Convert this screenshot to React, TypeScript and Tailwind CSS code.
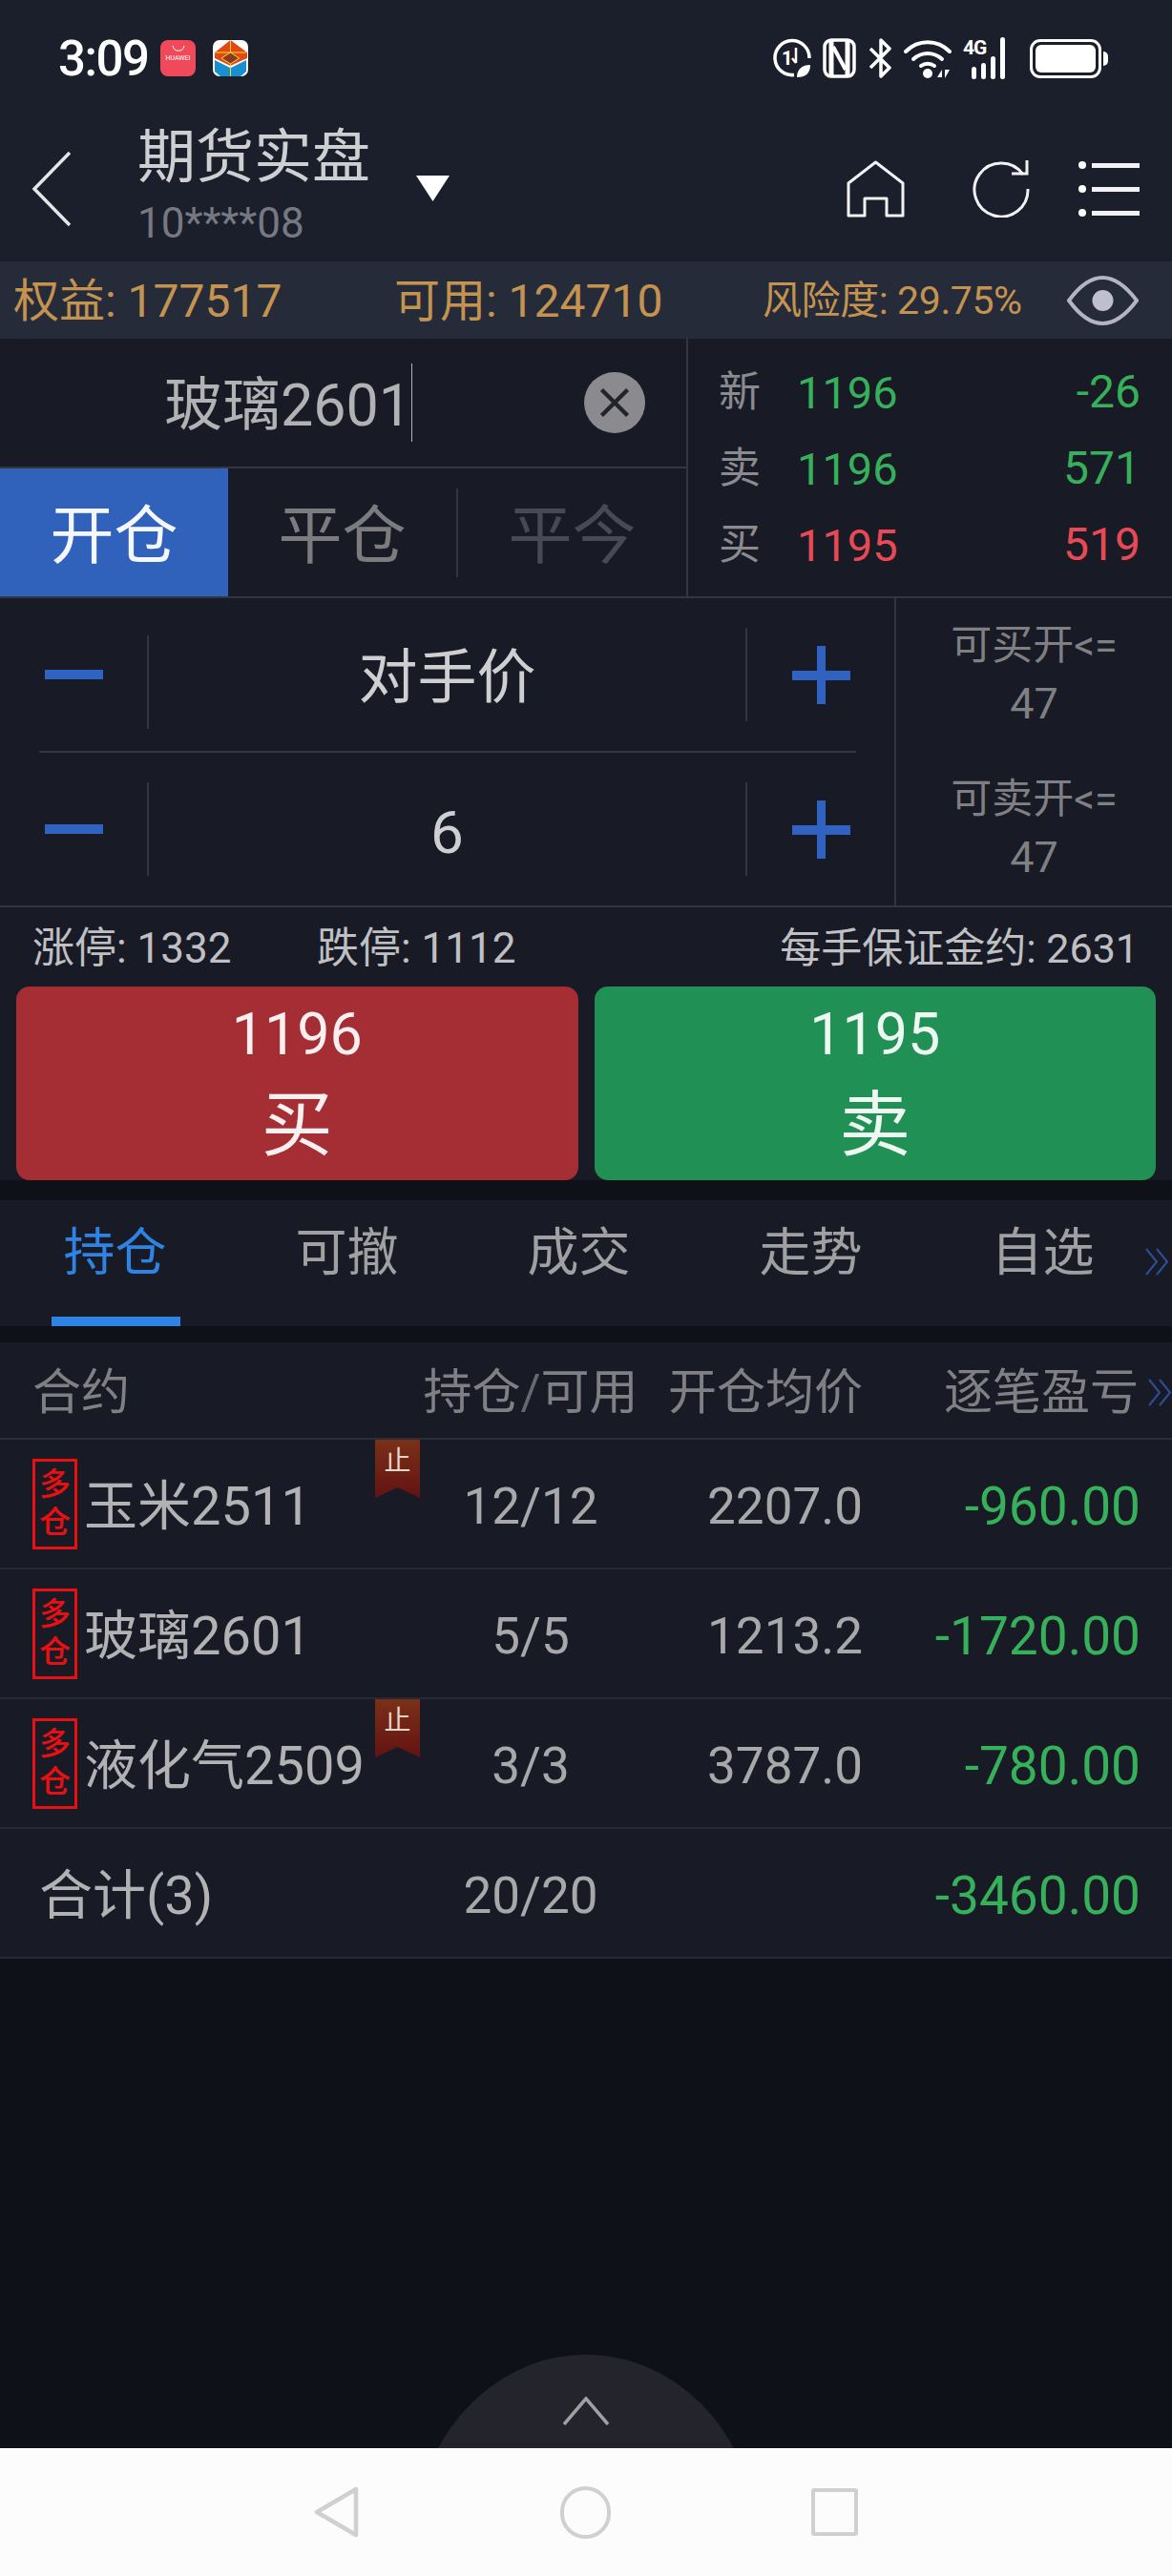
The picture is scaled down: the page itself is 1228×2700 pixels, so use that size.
import React from "react";

const positions = [
  { name: "玉米2511", pos: "12/12", price: "2207.0", pnl: "-960.00", stop: true },
  { name: "玻璃2601", pos: "5/5", price: "1213.2", pnl: "-1720.00", stop: false },
  { name: "液化气2509", pos: "3/3", price: "3787.0", pnl: "-780.00", stop: true },
];

const Chevrons = ({ className }: { className: string }) => (
  <svg viewBox="0 0 25 29" fill="none" stroke="#2f4f95" strokeWidth="2" className={className}>
    <path d="M1 1l11 13.5L1 28M12 1l11 13.5L12 28" />
  </svg>
);

const StatusIcons = () => (
  <div className="flex items-center">
    <svg viewBox="0 0 40 44" className="h-[44px] w-[40px]" fill="none" stroke="#fff" strokeWidth="3.5">
      <path d="M22 39.5A18 18 0 1 1 38 22" />
      <text x="9" y="29" fill="#fff" stroke="none" fontSize="20" fontWeight="700">1</text>
      <path d="M24 11v16M20 22l4 5" strokeWidth="2.5" />
      <path d="M25 42c0-9 6-13 14-13 0 9-5 13-14 13z" fill="#fff" stroke="none" />
    </svg>
    <svg viewBox="0 0 35 42" className="ml-[12px] h-[42px] w-[35px]" fill="none" stroke="#fff">
      <rect x="2" y="2" width="31" height="38" rx="7" strokeWidth="3.5" />
      <path d="M9 3v36M26 3v36" strokeWidth="5" />
      <path d="M11 9l13 24" strokeWidth="4" />
    </svg>
    <svg viewBox="0 0 24 44" className="ml-[13px] h-[44px] w-[24px]" fill="none" stroke="#fff" strokeWidth="3.5">
      <path d="M2 12l20 20-9 9V3l9 9L2 32" strokeLinejoin="round" />
    </svg>
    <svg viewBox="0 0 50 44" className="ml-[13px] h-[44px] w-[50px]" fill="none" stroke="#fff" strokeWidth="4" strokeLinecap="round">
      <path d="M2 15c13-13 33-13 46 0" />
      <path d="M10 23c9-8 21-8 30 0" />
      <path d="M18 30c4-3 10-3 14 0" />
      <circle cx="25" cy="38" r="5" fill="#fff" stroke="none" />
      <path d="M35 42h5l0-8zM43 34v9l5-9z" fill="#fff" stroke="none" />
    </svg>
    <div className="relative ml-[12px] h-[44px] w-[57px]">
      <span className="absolute left-0 top-0 text-[21px] leading-[22px] font-bold tracking-[-1px] text-white">4G</span>
      <div className="absolute bottom-0 left-[9px] flex items-end gap-[5px]">
        <div className="h-[13px] w-[5px] rounded-full bg-white" />
        <div className="h-[17px] w-[5px] rounded-full bg-white" />
        <div className="h-[24px] w-[5px] rounded-full bg-white" />
        <div className="h-[44px] w-[5px] rounded-full bg-white" />
      </div>
    </div>
    <div className="ml-[13px] flex items-center">
      <div className="h-[41px] w-[75px] rounded-[11px] border-[3px] border-white p-[3px]">
        <div className="h-full w-full rounded-[6px] bg-white" />
      </div>
      <div className="ml-[2px] h-[15px] w-[5px] rounded-r-full bg-white" />
    </div>
  </div>
);

const Ribbon = () => (
  <div className="absolute left-[393px] top-0 flex h-[61px] w-[47px] justify-center bg-linear-to-b from-[#7a3018] to-[#631212] pt-[7px] text-[28px] leading-[32px] text-[#e8d6cc] [clip-path:polygon(0_0,100%_0,100%_100%,50%_82%,0_100%)]">
    止
  </div>
);

const Stepper = ({ value, dividerClass }: { value: string; dividerClass: string }) => (
  <div className="flex flex-1 items-center pl-[47px] pr-[46px]">
    <div className="h-[10px] w-[61px] bg-[#3062c2]" />
    <div className={`ml-[46px] h-[98px] w-[2px] bg-[#33363d] ${dividerClass}`} />
    <div className="flex-1 pt-[7px] text-center text-[62px] leading-none text-[#cfcfd1]">{value}</div>
    <div className="h-[98px] w-[2px] bg-[#33363d]" />
    <div className="relative ml-[47px] h-[61px] w-[61px]">
      <div className="absolute left-0 top-[26px] h-[10px] w-[61px] bg-[#3062c2]" />
      <div className="absolute left-[26px] top-0 h-[61px] w-[9px] bg-[#3062c2]" />
    </div>
  </div>
);

export default function App() {
  return (
    <div className="flex h-[2700px] w-[1228px] flex-col overflow-hidden bg-[#181b25] font-[Roboto,'Noto_Sans_CJK_SC',sans-serif]">
      {/* status bar + title */}
      <header className="h-[274px] bg-[#1a1f2b]">
        <div className="flex h-[122px] items-center justify-between pl-[61px] pr-[67px]">
          <div className="flex items-center">
            <span className="w-[107px] text-[51px] leading-none font-medium tracking-[-1.5px] text-white">3:09</span>
            <div className="flex h-[38px] w-[37px] flex-col items-center rounded-[8px] bg-[#f04a5a]">
              <svg viewBox="0 0 14 6" className="mt-[6px] h-[6px] w-[14px]" fill="none" stroke="#fff" strokeWidth="1">
                <path d="M1 0c1 7 11 7 12 0" />
              </svg>
              <span className="mt-[3px] text-[7px] leading-[8px] text-white">HUAWEI</span>
            </div>
            <svg viewBox="0 0 37 38" className="ml-[18px] h-[38px] w-[37px]">
              <rect width="37" height="38" rx="7" fill="#fff" />
              <path d="M18.5 0L36 13v6L18.5 27 2 19v-6z" fill="#e04a12" />
              <path d="M18.5 13l9 6-9 6-9-6z" fill="#8a3a20" />
              <path d="M2 21l16 8v9H8l-6-5zM35 21l-16 8v9h10l6-5z" fill="#1a8fd0" />
              <path d="M2 13h33M18.5 0v13M9 19l9.500-6 9 6-9 6zM18.500 25v13" stroke="#f2d83a" strokeWidth="1" fill="none" />
            </svg>
          </div>
          <StatusIcons />
        </div>
        <div className="flex h-[152px] items-start">
          <svg viewBox="0 0 40 78" className="ml-[34px] mt-[37px] h-[78px] w-[40px]" fill="none" stroke="#e6e6e8" strokeWidth="3.5">
            <path d="M39 1L2 39l37 38" />
          </svg>
          <div className="ml-[70px] mt-[8px] w-[292px]">
            <div className="text-[61px] leading-[70px] text-[#cfcfd1]">期货实盘</div>
            <div className="mt-[9px] text-[44px] leading-[50px] text-[#767982]">10****08</div>
          </div>
          <div className="ml-0 mt-[62px] h-[27px] w-[35px] bg-white [clip-path:polygon(0_0,100%_0,50%_100%)]" />
          <svg viewBox="0 0 61 60" className="ml-[416px] mt-[46px] h-[60px] w-[61px]" fill="none" stroke="#f2f2f4" strokeWidth="3" strokeLinejoin="round">
            <path d="M2 58V24L30.500 2 59 24v34H42V40H19v18z" />
          </svg>
          <svg viewBox="0 0 60 60" className="ml-[71px] mt-[46px] h-[60px] w-[60px]" fill="none" stroke="#f2f2f4" strokeWidth="3">
            <path d="M58 30A28 28 0 1 1 53 15" />
            <path d="M57 0v14H41" />
          </svg>
          <div className="ml-[51px] mt-[46px] flex h-[60px] w-[64px] flex-col justify-between py-[1px]">
            {[0, 1, 2].map((i) => (
              <div key={i} className="flex items-center">
                <div className="h-[8px] w-[8px] rounded-full bg-white" />
                <div className="ml-[6px] h-[5px] flex-1 bg-[#f2f2f4]" />
              </div>
            ))}
          </div>
        </div>
      </header>

      {/* account summary */}
      <div className="flex h-[81px] items-center bg-[#262b3a] pl-[14px] text-[#c4934f]">
        <div className="w-[399px] pt-[2px] text-[48px] leading-none">权益: 177517</div>
        <div className="w-[386px] pt-[2px] text-[48px] leading-none">可用: 124710</div>
        <div className="w-[319px] pt-[2px] text-[41px] leading-none tracking-[-0.4px]">风险度: 29.75%</div>
        <svg viewBox="0 0 75 52" className="h-[52px] w-[75px]" fill="none" stroke="#b5b4c4" strokeWidth="4">
          <path d="M2 26Q37-22 73 26 37 74 2 26z" />
          <circle cx="37.500" cy="26" r="11" fill="#c0bfd0" stroke="none" />
        </svg>
      </div>

      {/* contract + quote */}
      <div className="flex h-[272px] border-b-2 border-[#33363d]">
        <div className="w-[719px]">
          <div className="flex h-[136px] items-center border-b-2 border-[#33363d] pl-[172px]">
            <span className="mt-[6px] text-[61px] leading-none text-[#b2b2b4]">玻璃2601</span>
            <div className="h-[82px] w-[1px] bg-[#b2b2b4]" />
            <div className="ml-[180px] flex h-[64px] w-[64px] items-center justify-center rounded-full bg-[#8b8b8f]">
              <svg viewBox="0 0 26 26" className="h-[32px] w-[32px]" fill="none" stroke="#22242c" strokeWidth="3.500">
                <path d="M2 2l22 22M24 2L2 24" />
              </svg>
            </div>
          </div>
          <div className="flex h-[134px]">
            <div className="flex w-[239px] items-center justify-center bg-[#3062bb] pt-[8px] text-[67px] leading-none text-[#f4f7ff]">开仓</div>
            <div className="flex flex-1 items-center">
              <div className="flex flex-1 justify-center pt-[8px] text-[67px] leading-none text-[#7c7c7e]">平仓</div>
              <div className="h-[93px] w-[2px] bg-[#33363d]" />
            </div>
            <div className="flex w-[239px] items-center justify-center pt-[8px] text-[67px] leading-none text-[#474a54]">平今</div>
          </div>
        </div>
        <div className="flex flex-1 flex-col justify-center border-l-2 border-[#33363d] pl-[32px] pr-[33px] pt-[2px]">
          {[
            { k: "新", p: "1196", v: "-26", c: "text-[#36b05a]" },
            { k: "卖", p: "1196", v: "571", c: "text-[#36b05a]" },
            { k: "买", p: "1195", v: "519", c: "text-[#e84a55]" },
          ].map((r) => (
            <div key={r.k} className="flex h-[80px] items-center">
              <span className="w-[82px] text-[44px] leading-none text-[#8b8b8f]">{r.k}</span>
              <span className={`text-[47px] leading-none ${r.c}`}>{r.p}</span>
              <span className={`flex-1 text-right text-[48px] leading-none ${r.c}`}>{r.v}</span>
            </div>
          ))}
        </div>
      </div>

      {/* order steppers */}
      <div className="flex h-[324px] border-b-2 border-[#33363d]">
        <div className="flex w-[937px] flex-col">
          <Stepper value="对手价" dividerClass="mt-[16px]" />
          <div className="ml-[41px] h-[2px] w-[856px] bg-[#33363d]" />
          <Stepper value="6" dividerClass="" />
        </div>
        <div className="flex flex-1 flex-col border-l-2 border-[#33363d] text-center text-[#808084]">
          {["可买开<=", "可卖开<="].map((t) => (
            <div key={t} className="h-[163px] pt-[25px]">
              <div className="text-[43px] leading-[48px]">{t}</div>
              <div className="mt-[14px] text-[45px] leading-[48px]">47</div>
            </div>
          ))}
        </div>
      </div>

      {/* limits */}
      <div className="flex h-[83px] items-center pl-[34px] pr-[35px] pt-[3px] leading-none text-[#c0c0c4]">
        <span className="w-[298px] text-[44px]">涨停: 1332</span>
        <span className="text-[44px]">跌停: 1112</span>
        <span className="flex-1 text-right text-[43px]">每手保证金约: 2631</span>
      </div>

      {/* buy / sell */}
      <div className="flex h-[203px] gap-[17px] px-[17px]">
        <div className="flex flex-1 flex-col items-center rounded-[14px] bg-[#a52e34] pt-[20px] text-[#f8f0f0]">
          <div className="text-[61px] leading-[60px]">1196</div>
          <div className="mt-[25px] text-[75px] leading-[80px]">买</div>
        </div>
        <div className="flex flex-1 flex-col items-center rounded-[14px] bg-[#209055] pt-[20px] text-[#eef8f2]">
          <div className="text-[61px] leading-[60px]">1195</div>
          <div className="mt-[25px] text-[75px] leading-[80px]">卖</div>
        </div>
      </div>
      <div className="h-[21px] bg-[#0e1118]" />

      {/* tabs */}
      <div className="relative flex h-[132px] items-center pb-[20px] text-[54px] leading-none text-[#a0a0a2]">
        <div className="ml-[-1px] w-[243px] text-center text-[#2f83e4]">持仓</div>
        <div className="w-[243px] text-center">可撤</div>
        <div className="w-[243px] text-center">成交</div>
        <div className="w-[243px] text-center">走势</div>
        <div className="w-[243px] text-center">自选</div>
        <div className="absolute bottom-0 left-[54px] h-[10px] w-[135px] bg-[#2f83e4]" />
        <Chevrons className="absolute left-[1200px] top-[50px] h-[29px] w-[25px]" />
      </div>
      <div className="h-[17px] bg-[#0e1118]" />

      {/* positions table */}
      <div className="flex h-[102px] items-center border-b-2 border-[#2a2d36] pt-[4px] text-[51px] leading-none text-[#808084]">
        <div className="w-[430px] pl-[34px]">合约</div>
        <div className="w-[252px] whitespace-nowrap text-center">
          <span>持仓</span>
          <span className="text-[#66686e]">/</span>
          <span>可用</span>
        </div>
        <div className="w-[222px] text-right">开仓均价</div>
        <div className="flex flex-1 items-center justify-end">
          <span>逐笔盈亏</span>
          <Chevrons className="ml-[10px] h-[29px] w-[25px]" />
        </div>
      </div>
      {positions.map((p) => (
        <div key={p.name} className="relative flex h-[136px] items-center border-b-2 border-[#262932] leading-none">
          {p.stop && <Ribbon />}
          <div className="flex w-[430px] items-center pl-[34px]">
            <div className="flex h-[95px] w-[47px] flex-col items-center justify-center border-[3px] border-[#e81010] text-[33px] leading-[40px] font-medium text-[#e81010]">
              <span>多</span>
              <span>仓</span>
            </div>
            <span className="ml-[7px] pt-[6px] text-[56px] text-[#b2b2b4]">{p.name}</span>
          </div>
          <div className="w-[252px] pt-[6px] text-center text-[53px] text-[#a8a8aa]">{p.pos}</div>
          <div className="w-[222px] pt-[6px] text-right text-[53px] text-[#a8a8aa]">{p.price}</div>
          <div className="flex-1 pr-[33px] pt-[6px] text-right text-[55px] text-[#36b05a]">{p.pnl}</div>
        </div>
      ))}
      <div className="flex h-[136px] items-center border-b-2 border-[#262932] pt-[6px] leading-none">
        <div className="w-[430px] pl-[41px] text-[56px] text-[#b2b2b4]">合计(3)</div>
        <div className="w-[252px] text-center text-[53px] text-[#a8a8aa]">20/20</div>
        <div className="w-[222px]" />
        <div className="flex-1 pr-[33px] text-right text-[55px] text-[#36b05a]">-3460.00</div>
      </div>

      {/* empty area with pull-up handle */}
      <div className="flex flex-1 flex-col items-center justify-end bg-[#0e1118]">
        <div className="relative h-[98px] w-[360px] overflow-hidden">
          <div className="h-[400px] w-[360px] rounded-[50%] bg-[#24252c]" />
          <svg viewBox="0 0 50 30" className="absolute left-[155px] top-[44px] h-[30px] w-[50px]" fill="none" stroke="#a0a0a0" strokeWidth="3.500">
            <path d="M2 29L25 2l23 27" />
          </svg>
        </div>
      </div>

      {/* system nav */}
      <nav className="flex h-[134px] items-center bg-[#fcfcfc]">
        <svg viewBox="0 0 47 54" className="ml-[329px] h-[54px] w-[47px]" fill="none" stroke="#d0d0d0" strokeWidth="4.500" strokeLinejoin="round">
          <path d="M44 3v48L3 27z" />
        </svg>
        <div className="ml-[211px] h-[55px] w-[53px] rounded-full border-[4.500px] border-[#d0d0d0]" />
        <div className="ml-[210px] h-[50px] w-[49px] rounded-[3px] border-[4.500px] border-[#d0d0d0]" />
      </nav>
    </div>
  );
}
